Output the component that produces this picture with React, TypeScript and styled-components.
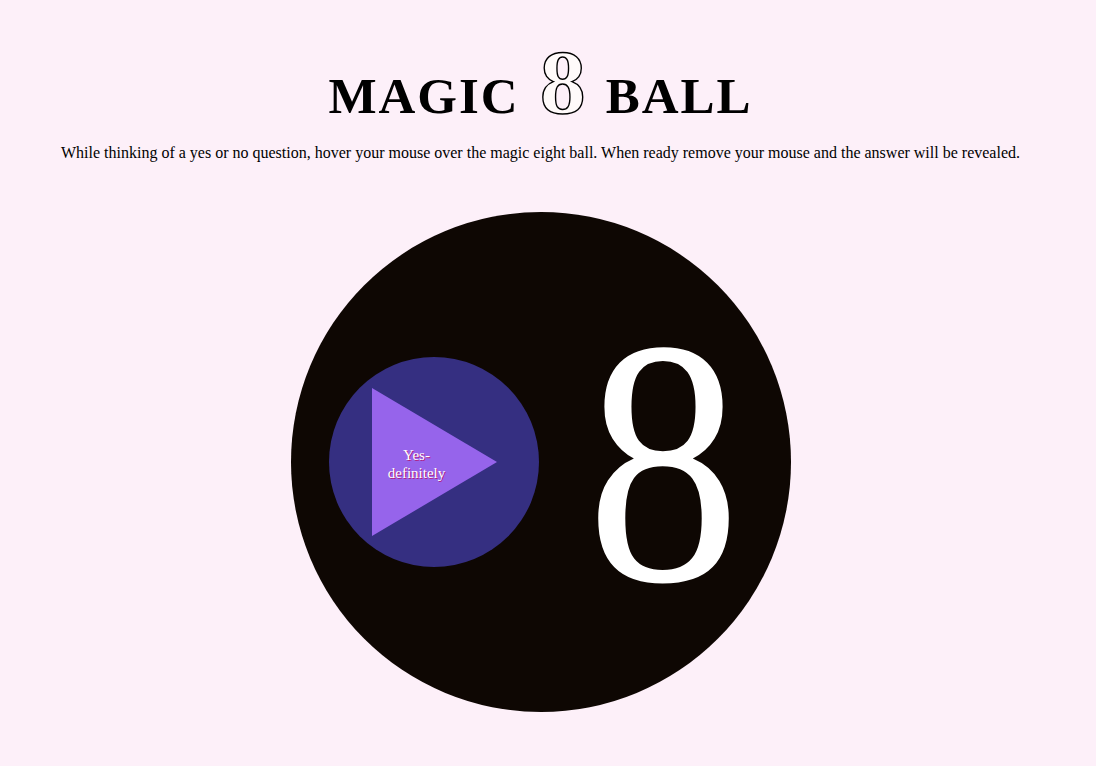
import React from "react";
import styled, { createGlobalStyle } from "styled-components";

const Global = createGlobalStyle`
  html, body { margin: 0; padding: 0; }
  body {
    background: #fdf0f9;
    font-family: "Liberation Serif", "Times New Roman", serif;
    color: #000;
  }
`;

const Page = styled.main`
  width: 1081px;
  display: flex;
  flex-direction: column;
  align-items: center;
  padding-top: 42px;
`;

const Title = styled.h1`
  margin: 0;
  display: flex;
  align-items: baseline;
  gap: 20px;
  font-family: "Liberation Serif", "Times New Roman", serif;
  font-weight: 700;
  font-size: 51px;
  letter-spacing: 2px;
  line-height: 80px;
`;

const TitleEight = styled.span`
  font-size: 92px;
  font-weight: 700;
  letter-spacing: 0;
  color: #fffafa;
  -webkit-text-stroke: 1.4px #000;
`;

const Intro = styled.p`
  margin: 7px 0 0;
  font-size: 16px;
  line-height: 20px;
  text-align: center;
`;

const Ball = styled.div`
  margin-top: 49px;
  width: 500px;
  height: 500px;
  border-radius: 50%;
  background: #0e0703;
  display: flex;
  align-items: center;
  box-sizing: border-box;
  padding-left: 38px;
`;

const Window = styled.div`
  width: 210px;
  height: 210px;
  flex: none;
  border-radius: 50%;
  background: #352f81;
  display: flex;
  align-items: center;
  padding-left: 43px;
  box-sizing: border-box;
`;

const Triangle = styled.div`
  position: relative;
  width: 0;
  height: 0;
  border-top: 74.5px solid transparent;
  border-bottom: 74.5px solid transparent;
  border-left: 125px solid #9664eb;
`;

const Answer = styled.span`
  position: absolute;
  left: -125px;
  top: -16px;
  width: 90px;
  text-align: center;
  color: #fff;
  font-size: 15px;
  line-height: 18px;
  text-shadow: 1px 1px 0 #b01d80;
`;

const BigEight = styled.span`
  margin-left: 37px;
  font-family: "Liberation Serif", "Times New Roman", serif;
  font-size: 350px;
  line-height: 1;
  color: #fff;
  transform: scaleX(0.88);
`;

export default function App() {
  return (
    <>
      <Global />
      <Page>
        <Title>
          <span>MAGIC</span>
          <TitleEight>8</TitleEight>
          <span>BALL</span>
        </Title>
        <Intro>
          While thinking of a yes or no question, hover your mouse over the magic eight ball. When ready remove your mouse and the answer will be revealed.
        </Intro>
        <Ball>
          <Window>
            <Triangle>
              <Answer>Yes-<br />definitely</Answer>
            </Triangle>
          </Window>
          <BigEight>8</BigEight>
        </Ball>
      </Page>
    </>
  );
}
